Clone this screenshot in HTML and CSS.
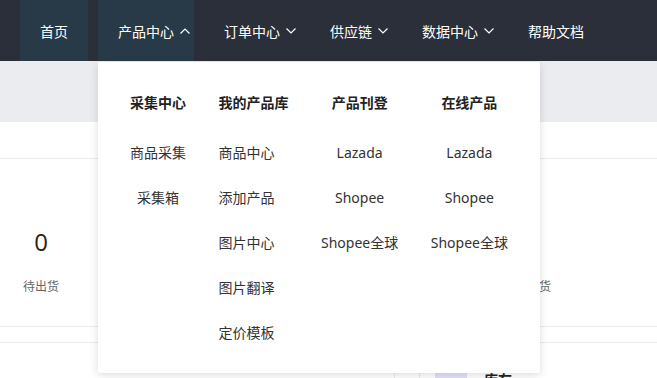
FILE: index.html
```html
<!DOCTYPE html>
<html lang="zh-CN">
<head>
    <meta charset="UTF-8">
    <meta name="viewport" content="width=device-width, initial-scale=1.0">
    <title>产品中心</title>
    <link rel="stylesheet" href="styles.css">
</head>
<body>
    <header class="navbar">
        <a class="nav-item active">首页</a>
        <div class="nav-item active has-sub">
            产品中心
            <svg class="arrow" width="10" height="6" viewBox="0 0 10 6"><polyline points="0.5,5.5 5,1 9.5,5.5" fill="none" stroke="currentColor" stroke-width="1.2"/></svg>

            <div class="dropdown">
                <div class="col">
                    <div class="col-title">采集中心</div>
                    <a>商品采集</a>
                    <a>采集箱</a>
                </div>
                <div class="col col-left">
                    <div class="col-title">我的产品库</div>
                    <a>商品中心</a>
                    <a>添加产品</a>
                    <a>图片中心</a>
                    <a>图片翻译</a>
                    <a>定价模板</a>
                </div>
                <div class="col">
                    <div class="col-title">产品刊登</div>
                    <a>Lazada</a>
                    <a>Shopee</a>
                    <a>Shopee全球</a>
                </div>
                <div class="col">
                    <div class="col-title">在线产品</div>
                    <a>Lazada</a>
                    <a>Shopee</a>
                    <a>Shopee全球</a>
                </div>
            </div>
        </div>
        <div class="nav-item has-sub">
            订单中心
            <svg class="arrow" width="10" height="6" viewBox="0 0 10 6"><polyline points="0.5,0.5 5,5 9.5,0.5" fill="none" stroke="currentColor" stroke-width="1.2"/></svg>
        </div>
        <div class="nav-item has-sub">
            供应链
            <svg class="arrow" width="10" height="6" viewBox="0 0 10 6"><polyline points="0.5,0.5 5,5 9.5,0.5" fill="none" stroke="currentColor" stroke-width="1.2"/></svg>
        </div>
        <div class="nav-item has-sub">
            数据中心
            <svg class="arrow" width="10" height="6" viewBox="0 0 10 6"><polyline points="0.5,0.5 5,5 9.5,0.5" fill="none" stroke="currentColor" stroke-width="1.2"/></svg>
        </div>
        <a class="nav-item">帮助文档</a>
    </header>

    <div class="band"></div>

    <section class="panel">
        <div class="panel-head"></div>
        <div class="stats">
            <div class="stat"><div class="num">0</div><div class="label">待出货</div></div>
            <div class="stat"><div class="num">0</div><div class="label">待审核</div></div>
            <div class="stat"><div class="num">0</div><div class="label">待处理</div></div>
            <div class="stat"><div class="num">0</div><div class="label">待打包</div></div>
            <div class="stat"><div class="num">0</div><div class="label">待揽收</div></div>
            <div class="stat"><div class="num">0</div><div class="label">运输中</div></div>
            <div class="stat"><div class="num">0</div><div class="label">已发货</div></div>
        </div>
    </section>

    <section class="panel panel-second">
        <div class="cell wide"></div>
        <div class="cell narrow"></div>
        <div class="entry">
            <span class="entry-icon">
                <svg width="14" height="14" viewBox="0 0 14 14"><rect x="3" y="2" width="8" height="10" fill="#6a5cf2"/><rect x="5" y="4" width="4" height="2" fill="#fff"/></svg>
            </span>
            <span class="entry-name">库存</span>
        </div>
    </section>
</body>
</html>
```

FILE: styles.css
```css
/* Basic Setup */
body {
    margin: 0;
    font-family: "Noto Sans", "Noto Sans CJK SC", sans-serif;
    font-size: 14px;
    color: #333;
    background: #fff;
    overflow: hidden;
}

a {
    color: inherit;
    text-decoration: none;
}

/* Top navigation */
.navbar {
    display: flex;
    gap: 10px;
    height: 61px;
    padding-left: 20px;
    background: #2b2f3a;
    color: #fff;
}

.nav-item {
    position: relative;
    display: flex;
    align-items: center;
    padding: 0 20px;
    white-space: nowrap;
}

.nav-item.has-sub {
    padding-right: 3px;
}

.nav-item.active {
    background: #283a48;
}

.arrow {
    margin-left: 6px;
    margin-right: 1px;
}

/* Dropdown menu */
.dropdown {
    position: absolute;
    top: 62px;
    left: 0;
    z-index: 5;
    display: flex;
    justify-content: space-between;
    box-sizing: border-box;
    width: 442px;
    padding: 18px 32px;
    background: #fff;
    color: #333;
    border-radius: 2px;
    box-shadow: 0 2px 8px rgba(0, 0, 0, 0.14);
}

.col {
    display: flex;
    flex-direction: column;
    align-items: center;
}

.col-left {
    align-items: flex-start;
}

.col a,
.col-title {
    line-height: 45px;
    white-space: nowrap;
}

.col-title {
    margin-bottom: 5px;
    font-weight: bold;
    color: #222;
}

/* Page body */
.band {
    height: 61px;
    background: #ebecf0;
}

.panel-head {
    height: 36px;
    border-bottom: 1px solid #ececec;
}

.panel {
    border-bottom: 1px solid #ececec;
}

.stats {
    display: flex;
    padding: 67px 0 29px;
}

.stat {
    width: 82px;
    text-align: center;
}

.num {
    font-family: "Open Sans", sans-serif;
    font-size: 24px;
    line-height: 32px;
    color: #222;
}

.label {
    margin-top: 19px;
    font-size: 12px;
    line-height: 20px;
    color: #666;
}

.panel-second {
    display: flex;
    margin-top: 15px;
    border-top: 1px solid #ececec;
    border-bottom: none;
    padding-top: 16px;
}

.cell {
    height: 60px;
    border-right: 1px solid #ececec;
}

.cell.wide {
    width: 394px;
}

.cell.narrow {
    width: 24px;
}

.entry {
    display: flex;
    align-items: flex-start;
    gap: 17px;
    padding: 12px 0 0 15px;
}

.entry-icon {
    display: flex;
    align-items: center;
    justify-content: center;
    width: 32px;
    height: 32px;
    background: #e3e0fb;
    border-radius: 2px;
}

.entry-name {
    font-weight: bold;
    color: #222;
    line-height: 20px;
    margin-top: -1px;
}
```
